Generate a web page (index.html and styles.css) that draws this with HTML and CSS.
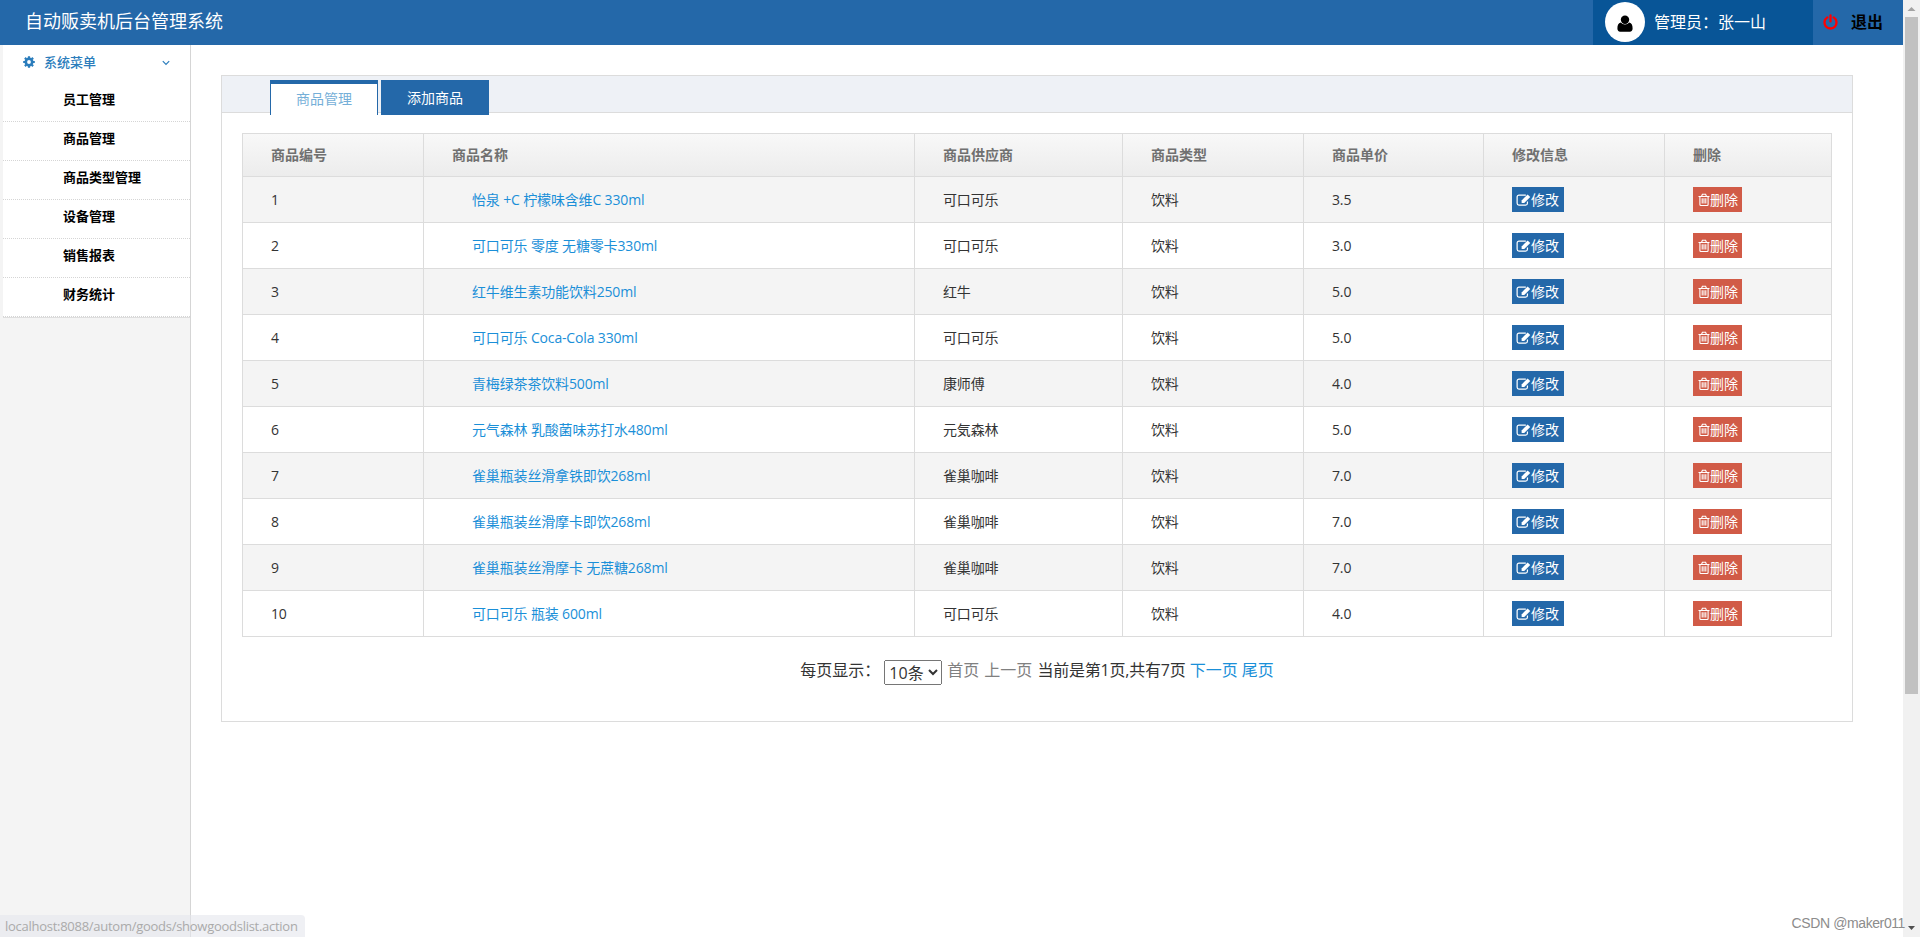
FILE: index.html
```html
<!DOCTYPE html>
<html lang="zh-CN">
<head>
  <meta charset="UTF-8">
  <title>自动贩卖机后台管理系统</title>
  <link rel="stylesheet" href="styles.css">
</head>
<body>
  <svg class="sprite" xmlns="http://www.w3.org/2000/svg">
    <symbol id="i-edit" viewBox="0 0 16 14">
      <path fill="none" stroke="currentColor" stroke-width="1.3" d="M10.5 1.7H3.2A2 2 0 0 0 1.2 3.7v6.8a2 2 0 0 0 2 2h7a2 2 0 0 0 2-2V8.6"/>
      <path fill="currentColor" d="M6 10.2V7.4L12.4 1l2.8 2.8-6.4 6.4z"/>
    </symbol>
    <symbol id="i-trash" viewBox="0 0 12 14">
      <path fill="none" stroke="currentColor" stroke-width="1.1" d="M0.5 3.5h11M3.6 3.3L4.4 1.3h3.2l.8 2M1.9 3.7v7.8q0 1 1 1h6.2q1 0 1-1V3.7M4.2 5.3v5.2M6 5.3v5.2M7.8 5.3v5.2"/>
    </symbol>
  </svg>

  <div class="window">
    <div class="page">
      <div class="header">
        <h1>自动贩卖机后台管理系统</h1>
        <div class="user">
          <span class="avatar">
            <svg width="16" height="18" viewBox="0 0 16 18"><circle cx="8" cy="4.8" r="4.2"/><path d="M3.8 7.6C1.2 8 .4 10.4.4 13.6c0 2 1 3.2 2.8 3.2h9.600c1.800 0 2.800-1.200 2.800-3.200 0-3.200-.8-5.600-3.400-6a5.600 5.600 0 0 1-8.400 0z"/></svg>
          </span>
          <span>管理员：张一山</span>
        </div>
        <a class="logout">
          <svg width="15" height="16" viewBox="0 0 15 16"><path fill="none" stroke="#f00" stroke-width="2.300" stroke-linecap="round" d="M4.300 3.400a6 6 0 1 0 6.400 0M7.500 1.400v6"/></svg>
          <span>退出</span>
        </a>
      </div>

      <div class="main">
        <div class="sidebar">
          <div class="menu">
            <div class="menu-title">
              <svg width="12" height="12" viewBox="0 0 12 12"><circle cx="6" cy="6" r="3.2" fill="none" stroke="currentColor" stroke-width="2.6"/><path stroke="currentColor" stroke-width="2.2" d="M6 .2v2M6 9.8v2M.2 6h2M9.8 6h2M1.900 1.900l1.400 1.400M8.700 8.700l1.400 1.400M1.900 10.100l1.400-1.400M8.700 3.300l1.400-1.400"/></svg>
              <span>系统菜单</span>
              <svg class="arrow" width="8" height="6" viewBox="0 0 8 6"><path fill="none" stroke="currentColor" stroke-width="1.2" d="M.8 1.200L4 4.400l3.200-3.200"/></svg>
            </div>
            <ul>
              <li>员工管理</li>
              <li>商品管理</li>
              <li>商品类型管理</li>
              <li>设备管理</li>
              <li>销售报表</li>
              <li>财务统计</li>
            </ul>
          </div>
        </div>

        <div class="content">
          <div class="panel">
            <div class="tabs">
              <a class="tab active">商品管理</a>
              <a class="tab">添加商品</a>
            </div>
            <table class="goods">
              <colgroup>
                <col class="c-id"><col class="c-name"><col class="c-supplier"><col class="c-type"><col class="c-price"><col class="c-edit"><col class="c-del">
              </colgroup>
              <thead>
                <tr><th>商品编号</th><th>商品名称</th><th>商品供应商</th><th>商品类型</th><th>商品单价</th><th>修改信息</th><th>删除</th></tr>
              </thead>
              <tbody></tbody>
            </table>
            <div class="pager">
              <span class="label">每页显示：</span>
              <select><option>10条</option></select>
              <span class="off">首页</span>
              <span class="off">上一页</span>
              <span class="current">当前是第1页,共有7页</span>
              <a>下一页</a>
              <a>尾页</a>
            </div>
          </div>
        </div>
      </div>
    </div>

    <div class="scrollbar">
      <svg width="17" height="17" viewBox="0 0 17 17"><path fill="#a3a3a3" d="M4.5 11h8L8.5 7z"/></svg>
      <div class="thumb"></div>
      <svg class="down" width="17" height="17" viewBox="0 0 17 17"><path fill="#505050" d="M5 6h7L8.5 10z"/></svg>
    </div>
  </div>

  <div class="status">localhost:8088/autom/goods/showgoodslist.action</div>
  <div class="watermark">CSDN @maker011</div>

  <script>
    const goods = [
      ['怡泉 +C 柠檬味含维C 330ml', '可口可乐', '3.5'],
      ['可口可乐 零度 无糖零卡330ml', '可口可乐', '3.0'],
      ['红牛维生素功能饮料250ml', '红牛', '5.0'],
      ['可口可乐 Coca-Cola 330ml', '可口可乐', '5.0'],
      ['青梅绿茶茶饮料500ml', '康师傅', '4.0'],
      ['元气森林 乳酸菌味苏打水480ml', '元気森林', '5.0'],
      ['雀巢瓶装丝滑拿铁即饮268ml', '雀巢咖啡', '7.0'],
      ['雀巢瓶装丝滑摩卡即饮268ml', '雀巢咖啡', '7.0'],
      ['雀巢瓶装丝滑摩卡 无蔗糖268ml', '雀巢咖啡', '7.0'],
      ['可口可乐 瓶装 600ml', '可口可乐', '4.0']
    ];
    document.querySelector('.goods tbody').innerHTML = goods.map((g, i) => `
      <tr>
        <td>${i + 1}</td>
        <td class="name"><a>${g[0]}</a></td>
        <td>${g[1]}</td>
        <td>饮料</td>
        <td>${g[2]}</td>
        <td class="act"><button class="btn edit"><svg width="15" height="14"><use href="#i-edit"/></svg><span>修改</span></button></td>
        <td class="act"><button class="btn del"><svg width="12" height="14"><use href="#i-trash"/></svg><span>删除</span></button></td>
      </tr>`).join('');
  </script>
</body>
</html>
```

FILE: styles.css
```css
* { box-sizing: border-box; }
body { margin: 0; height: 937px; overflow: hidden; background: #fff; color: #333; font-family: "Open Sans", "Noto Sans CJK SC", sans-serif; font-size: 14px; }
svg { display: block; flex: none; }
.sprite { position: absolute; width: 0; height: 0; }
.window { display: flex; height: 937px; }
.page { flex: 1; display: flex; flex-direction: column; }

/* header */
.header { display: flex; height: 45px; background: #2468a9; color: #fff; }
.header h1 { flex: 1; margin: 0; padding-left: 25px; font-size: 18px; font-weight: 400; line-height: 42px; }
.user { display: flex; align-items: center; gap: 9px; width: 220px; padding: 0 0 1px 12px; background: #085597; font-size: 16px; }
.user span:last-child, .logout span { padding-bottom: 2px; }
.avatar { display: flex; align-items: center; justify-content: center; width: 40px; height: 40px; border-radius: 50%; background: #fff; padding-top: 3px; }
.logout { display: flex; align-items: center; gap: 13px; width: 90px; padding: 0 0 1px 10px; color: #000; font-size: 16px; font-weight: bold; }

.main { flex: 1; display: flex; }

/* sidebar */
.sidebar { width: 191px; background: #f4f4f4; border-right: 1px solid #d5d5d5; }
.menu { margin-left: 3px; background: #fff; border-bottom: 1px solid #ddd; }
.menu-title { display: flex; align-items: center; height: 38px; padding: 0 20px 4px; color: #2b7dbc; font-size: 13px; font-weight: 500; }
.menu-title span { flex: 1; padding: 0 0 2px 9px; }
.menu-title .arrow { margin-top: 2px; }
.menu ul { margin: 0; padding: 0; list-style: none; }
.menu li { height: 39px; padding-left: 60px; line-height: 33px; border-bottom: 1px dotted #d5d5d5; color: #000; font-size: 13px; font-weight: bold; }

/* content */
.content { flex: 1; padding: 30px 50px 0 30px; }
.panel { height: 647px; border: 1px solid #dcdcdc; }
.tabs { display: flex; gap: 3px; height: 37px; padding: 4px 0 0 48px; background: #eef1f6; border-bottom: 1px solid #dcdcdc; }
.tab { width: 108px; height: 35px; line-height: 35px; border: 1px solid #2468a9; border-width: 0 1px; background: #2468a9; color: #fff; text-align: center; }
.tab.active { border-top: 4px solid #2468a9; background: #fff; color: #75afd8; line-height: 29px; }

.goods { width: 1590px; margin: 20px 0 0 20px; table-layout: fixed; border-collapse: separate; border-spacing: 0; border: 1px solid #dcdcdc; border-width: 1px 0 0 1px; }
.c-id { width: 181px; }
.c-name { width: 491px; }
.c-supplier { width: 208px; }
.c-type, .c-edit { width: 181px; }
.c-price { width: 180px; }
.c-del { width: 167px; }
.goods th, .goods td { padding: 0 0 1px 28px; border: 1px solid #dcdcdc; border-width: 0 1px 1px 0; text-align: left; white-space: nowrap; }
.goods th { height: 43px; padding-bottom: 2px; background: linear-gradient(#f8f8f8, #ececec); color: #707070; font-weight: bold; }
.goods td { height: 46px; letter-spacing: -0.15px; }
.goods tbody tr:nth-child(odd) { background: #f4f4f4; }
.goods .name { padding-left: 48px; }
.goods .act { padding-bottom: 0; }
a { color: #1a8fd8; }
.btn { display: flex; align-items: center; height: 25px; padding: 0 5px; border: 0; color: #fff; font: 14px "Open Sans", "Noto Sans CJK SC", sans-serif; white-space: nowrap; }
.btn span { padding-bottom: 2px; }
.edit { width: 52px; background: #2468a9; padding-left: 4px; }
.del { width: 49px; background: #d15b47; }

.pager { display: flex; justify-content: center; gap: 5px; margin-top: 21px; font-size: 16px; line-height: 24px; }
.pager .label { margin-right: -1px; }
.pager select { width: 58px; height: 25px; margin-top: 2px; padding: 0; color: #333; font: 16px "Open Sans", "Noto Sans CJK SC", sans-serif; }
.pager .off { color: #808080; }
.pager .current { letter-spacing: -0.2px; }
.pager a { margin-left: -1px; }

/* scrollbar */
.scrollbar { display: flex; flex-direction: column; width: 17px; background: #f1f1f1; }
.thumb { height: 677px; margin: 0 2px; background: #c1c1c1; }
.down { margin-top: auto; }

.status { position: absolute; left: 0; bottom: 0; width: 305px; height: 22px; padding-left: 5px; border-radius: 0 4px 0 0; background: rgba(228, 230, 237, 0.6); color: #aaa; font-size: 13px; letter-spacing: -0.27px; line-height: 23px; white-space: nowrap; }
.watermark { position: absolute; right: 15px; bottom: 6px; color: #8c8c8c; font: 14px "Liberation Sans", sans-serif; letter-spacing: -0.4px; }
```
